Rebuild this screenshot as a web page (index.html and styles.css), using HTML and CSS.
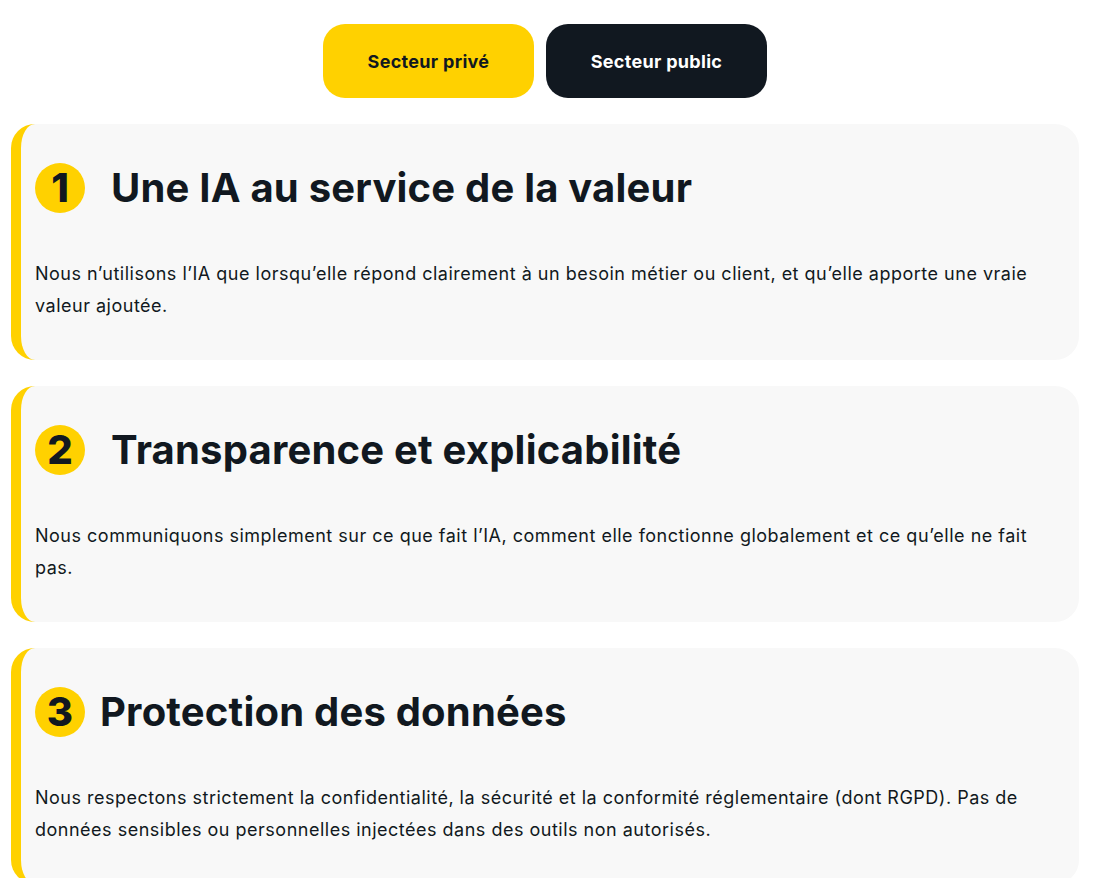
FILE: index.html
```html
<!DOCTYPE html>
<html lang="fr">
<head>
<meta charset="utf-8">
<link rel="stylesheet" href="styles.css">
</head>
<body>
<div class="page">
  <div class="toggle">
    <button class="tab tab-active">Secteur privé</button>
    <button class="tab tab-dark">Secteur public</button>
  </div>
  <section class="card">
    <div class="card-head">
      <span class="num">1</span>
      <h2 class="title title-wide">Une IA au service de la valeur</h2>
    </div>
    <p class="text">Nous n’utilisons l’IA que lorsqu’elle répond clairement à un besoin métier ou client, et qu’elle apporte une vraie valeur ajoutée.</p>
  </section>
  <section class="card">
    <div class="card-head">
      <span class="num">2</span>
      <h2 class="title title-wide">Transparence et explicabilité</h2>
    </div>
    <p class="text">Nous communiquons simplement sur ce que fait l’IA, comment elle fonctionne globalement et ce qu’elle ne fait pas.</p>
  </section>
  <section class="card">
    <div class="card-head">
      <span class="num">3</span>
      <h2 class="title">Protection des données</h2>
    </div>
    <p class="text">Nous respectons strictement la confidentialité, la sécurité et la conformité réglementaire (dont RGPD). Pas de données sensibles ou personnelles injectées dans des outils non autorisés.</p>
  </section>
</div>
</body>
</html>
```

FILE: styles.css
```css
* { box-sizing: border-box; }
html, body { margin: 0; padding: 0; background: #fff; }
body {
  font-family: "Inter", "Liberation Sans", sans-serif;
  color: #111820;
}
.page {
  width: 1068px;
  margin-left: 11px;
  padding-top: 24px;
  display: flex;
  flex-direction: column;
  gap: 26px;
}
.toggle {
  display: flex;
  justify-content: center;
  gap: 12px;
}
.tab {
  height: 74px;
  border: none;
  border-radius: 22px;
  font-family: inherit;
  font-weight: 700;
  font-size: 18px;
  letter-spacing: 0.3px;
  cursor: pointer;
}
.tab-active { width: 211px; background: #ffd100; color: #111820; }
.tab-dark { width: 221px; background: #111820; color: #fff; }
.card {
  background: #f8f8f8;
  border-left: 10px solid #ffd100;
  border-radius: 24px;
  padding: 39px 24px 38px 14px;
}
.card-head {
  display: flex;
  align-items: center;
  height: 50px;
  gap: 15px;
  margin-bottom: 45px;
}
.num {
  width: 50px;
  height: 50px;
  flex: none;
  border-radius: 50%;
  background: #ffd100;
  color: #111820;
  font-weight: 800;
  font-size: 40px;
  line-height: 50px;
  text-align: center;
}
.title {
  margin: 0;
  font-size: 40px;
  font-weight: 700;
  line-height: 50px;
  letter-spacing: 0.2px;
}
.title-wide { margin-left: 11px; }
.text {
  margin: 0;
  font-size: 18px;
  line-height: 32px;
  letter-spacing: 0.5px;
}
```
